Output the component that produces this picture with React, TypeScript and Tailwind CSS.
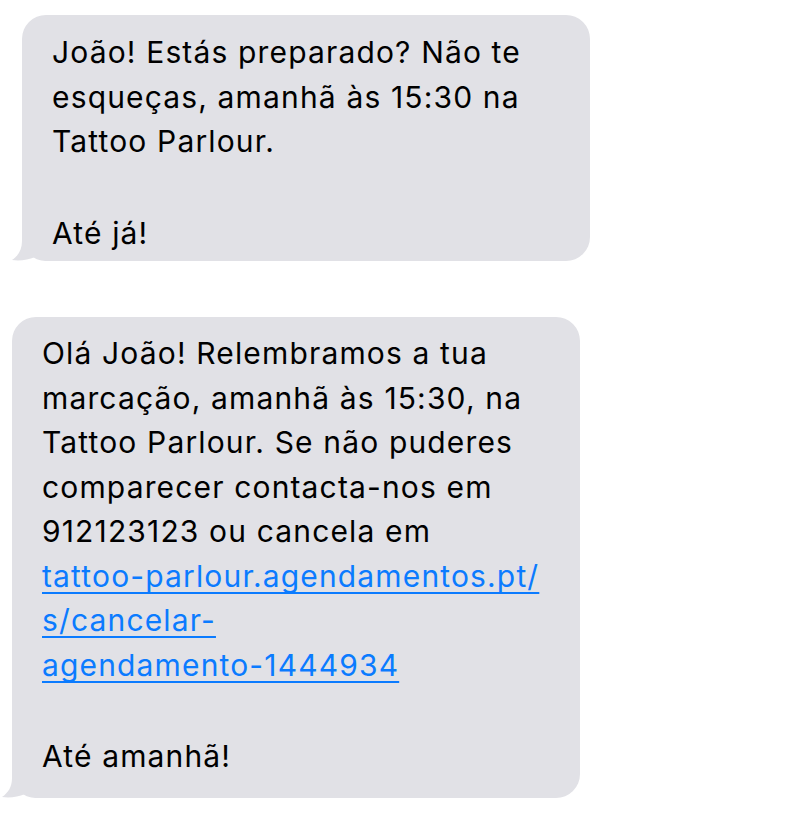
import type { ReactNode } from "react";

function Tail() {
  return (
    <svg
      className="absolute bottom-0 left-[-11px]"
      width="40"
      height="28"
      viewBox="0 0 40 28"
      fill="#e1e1e6"
    >
      <path d="M11 0 L11 8 C11 17 7 23 1 27 C9 28 17 27 24 24 C28 26 32 27.5 38 28 L38 0 Z" />
    </svg>
  );
}

function Bubble({ lines, className, pad }: { lines: ReactNode[]; className: string; pad: string }) {
  return (
    <div className={"relative w-[568px] rounded-[24px] bg-[#e1e1e6] " + className}>
      <Tail />
      <div className={"relative pl-[30px] " + pad}>
        {lines.map((l, i) =>
          l === "" ? (
            <div key={i} className="h-[47px]" />
          ) : (
            <div key={i} className="h-[44.5px] whitespace-nowrap leading-[44.5px]">
              {l}
            </div>
          ),
        )}
      </div>
    </div>
  );
}

const Link = ({ children }: { children: ReactNode }) => (
  <span className="text-[#0b7bff] underline decoration-2 underline-offset-[5px] [text-decoration-skip-ink:none]">
    {children}
  </span>
);

export default function App() {
  return (
    <div
      className="min-h-screen bg-white pt-[15px] text-[30px] tracking-[1.15px] text-black"
      style={{ fontFamily: "Inter, 'Noto Sans', sans-serif" }}
    >
      <Bubble
        className="ml-[22px] h-[246px]"
        pad="pt-[15px]"
        lines={[
          "João! Estás preparado? Não te",
          "esqueças, amanhã às 15:30 na",
          "Tattoo Parlour.",
          "",
          "Até já!",
        ]}
      />
      <Bubble
        className="mt-[56px] ml-[12px] h-[481px]"
        pad="pt-[14px]"
        lines={[
          "Olá João! Relembramos a tua",
          "marcação, amanhã às 15:30, na",
          "Tattoo Parlour. Se não puderes",
          "comparecer contacta-nos em",
          "912123123 ou cancela em",
          <Link>tattoo-parlour.agendamentos.pt/</Link>,
          <Link>s/cancelar-</Link>,
          <Link>agendamento-1444934</Link>,
          "",
          "Até amanhã!",
        ]}
      />
    </div>
  );
}
